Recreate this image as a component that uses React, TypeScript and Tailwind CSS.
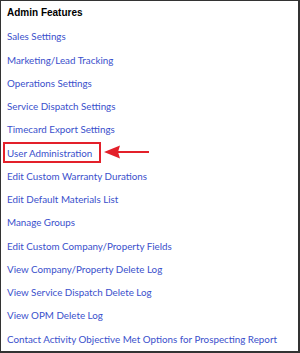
import React from 'react';

const links = [
  'Sales Settings',
  'Marketing/Lead Tracking',
  'Operations Settings',
  'Service Dispatch Settings',
  'Timecard Export Settings',
  'User Administration',
  'Edit Custom Warranty Durations',
  'Edit Default Materials List',
  'Manage Groups',
  'Edit Custom Company/Property Fields',
  'View Company/Property Delete Log',
  'View Service Dispatch Delete Log',
  'View OPM Delete Log',
  'Contact Activity Objective Met Options for Prospecting Report',
];

function Arrow() {
  return (
    <svg width="45" height="14" viewBox="0 0 45 14" className="absolute left-[103px] top-[4px]">
      <line x1="13" y1="7" x2="45" y2="7" stroke="#e3202a" strokeWidth="2" />
      <polygon points="0,7 16,0.5 14,7 16,13.5" fill="#e3202a" />
    </svg>
  );
}

export default function App() {
  return (
    <div className="h-[353px] w-[300px] overflow-hidden bg-white">
      <div className="h-full w-full border-t border-l border-r-2 border-b-2 border-[#333] pt-[5px]">
        <p className="px-[6px] text-[10px] font-bold leading-[14px] text-black" style={{ fontFamily: '"Liberation Sans", Arial, sans-serif' }}>
          Admin Features
        </p>
        <ul className="mt-[5px] flex flex-col" style={{ fontFamily: 'Lato, sans-serif' }}>
          {links.map((l) => (
            <li key={l} className="relative flex h-[23.25px] items-center px-[6px] text-[9.8px] text-[#3a50cc]">
              <span>{l}</span>
              {l === 'User Administration' && (
                <>
                  <span className="absolute left-[2px] top-[1px] h-[21px] w-[98px] border-2 border-[#e3202a]" />
                  <Arrow />
                </>
              )}
            </li>
          ))}
        </ul>
      </div>
    </div>
  );
}
